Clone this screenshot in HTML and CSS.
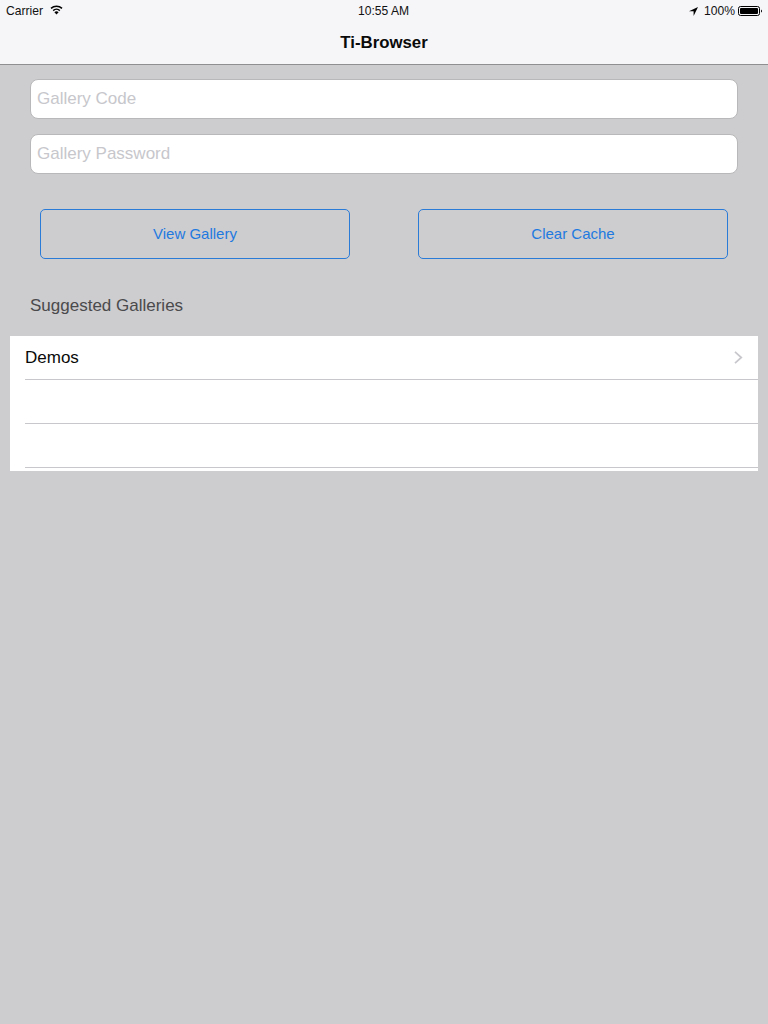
FILE: index.html
```html
<!DOCTYPE html>
<html lang="en">
<head>
<meta charset="utf-8">
<title>Ti-Browser</title>
<link rel="stylesheet" href="styles.css">
</head>
<body>
<header class="nav">
  <div class="status">
    <div class="status-left">
      <span>Carrier</span>
      <svg class="wifi" width="13" height="10" viewBox="0 0 13 10"><path d="M6.5 9.600 4.400 7.200a3 3 0 0 1 4.200 0Z" fill="#000"/><path d="M3.200 5.600a4.800 4.800 0 0 1 6.600 0" fill="none" stroke="#000" stroke-width="1.500"/><path d="M1 3.400a8 8 0 0 1 11 0" fill="none" stroke="#000" stroke-width="1.500"/></svg>
    </div>
    <div class="status-time">10:55 AM</div>
    <div class="status-right">
      <svg class="loc" width="9" height="9" viewBox="0 0 9 9"><path d="M9 0 0 4.200h4.600V9Z" fill="#000"/></svg>
      <span>100%</span>
      <svg class="batt" width="24" height="10" viewBox="0 0 24 10"><rect x=".5" y=".5" width="21" height="9" rx="2" fill="none" stroke="#000"/><rect x="2" y="2" width="18" height="6" rx="1" fill="#000"/><path d="M23 3.400c.7.3 1 .9 1 1.600s-.3 1.300-1 1.600Z" fill="#000"/></svg>
    </div>
  </div>
  <h1 class="title">Ti-Browser</h1>
</header>
<main class="content">
  <div class="field">Gallery Code</div>
  <div class="field">Gallery Password</div>
  <div class="actions">
    <div class="btn">View Gallery</div>
    <div class="btn">Clear Cache</div>
  </div>
  <div class="section-label">Suggested Galleries</div>
  <div class="table">
    <div class="row">
      <span>Demos</span>
      <svg class="chev" width="9" height="13" viewBox="0 0 9 13"><path d="M1 .8 7.300 6.500 1 12.200" fill="none" stroke="#c7c7cc" stroke-width="1.700"/></svg>
    </div>
    <div class="row"></div>
    <div class="row"></div>
  </div>
</main>
</body>
</html>
```
FILE: styles.css
```css
* { box-sizing: border-box; }
html, body { margin: 0; height: 100%; }
body {
  width: 768px;
  height: 1024px;
  overflow: hidden;
  background: #cdccce;
  font-family: "Liberation Sans", Arial, sans-serif;
}
.nav {
  height: 65px;
  background: #f6f5f8;
  border-bottom: 1px solid #8f8f91;
}
.status {
  height: 22px;
  padding: 0 6px;
  display: grid;
  grid-template-columns: 1fr auto 1fr;
  align-items: center;
  font-size: 12.100px;
  color: #111;
}
.status-left, .status-right { display: flex; align-items: center; }
.status-left { gap: 7px; }
.wifi { margin-top: -2px; }
.status-time { margin-left: -1px; }
.status-right { gap: 3px; justify-content: flex-end; }
.loc { margin-right: 3px; }
.title {
  margin: 0;
  height: 42px;
  line-height: 41px;
  text-align: center;
  font-size: 16.800px;
  font-weight: 700;
  color: #0a0a0a;
}
.content { padding: 14px 10px 0; }
.field {
  height: 40px;
  margin: 0 20px 15px;
  padding-left: 6px;
  line-height: 38px;
  font-size: 17px;
  color: #c7c7cc;
  background: #fff;
  border: 1px solid #b8b8ba;
  border-radius: 8px;
}
.actions {
  display: flex;
  justify-content: space-between;
  margin: 35px 30px 0;
}
.btn {
  width: 310px;
  height: 50px;
  line-height: 48px;
  text-align: center;
  font-size: 15px;
  color: #1f7ae0;
  border: 1px solid #2a7bd8;
  border-radius: 5px;
}
.section-label {
  margin: 37px 20px 0;
  height: 40px;
  line-height: 20px;
  font-size: 17px;
  color: #4a4a4c;
}
.table { background: #fff; height: 135px; }
.row {
  height: 44px;
  margin-left: 15px;
  border-bottom: 1px solid #c8c7cc;
  display: flex;
  align-items: center;
  justify-content: space-between;
  padding-right: 15px;
  font-size: 17px;
  color: #0a0a0a;
}
```
